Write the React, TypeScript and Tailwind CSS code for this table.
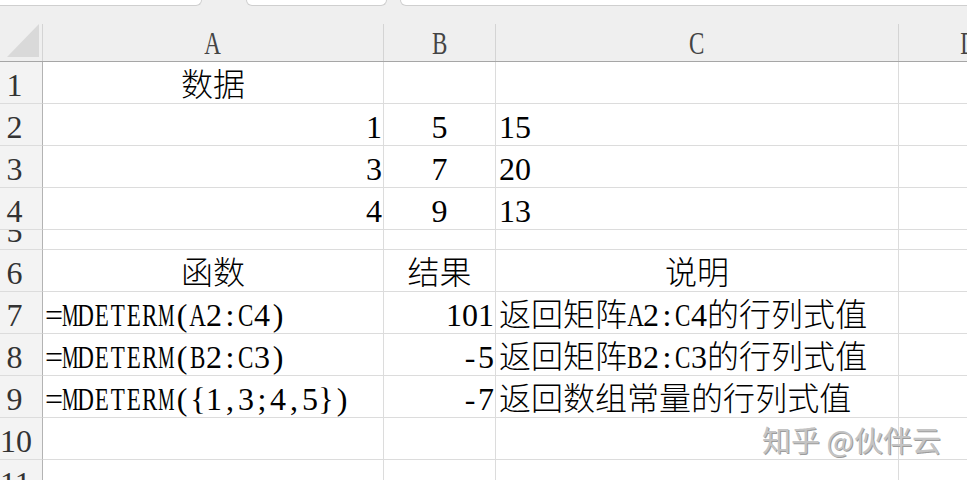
import React from "react";

type Align = "left" | "center" | "right";

interface CellData {
    text: string;
    align: Align;
}

interface RowData {
    label: string;
    short?: boolean;
    cells: (CellData | null)[];
}

// half-width chars get a fixed 16px box, like the sheet's monospace font
function Txt({ s }: { s: string }) {
    return (
        <>
            {s.split("").map((ch, i) =>
                ch.charCodeAt(0) < 128 ? (
                    <span key={i} className="inline-flex w-[16px] justify-center">
                        {/[A-Z]/.test(ch) ? (
                            <span className={`inline-block ${ch === "M" ? "scale-x-[0.58]" : "scale-x-[0.72]"}`}>
                                {ch}
                            </span>
                        ) : (
                            ch
                        )}
                    </span>
                ) : (
                    <span key={i}>{ch}</span>
                )
            )}
        </>
    );
}

const colWidths = ["w-[341px]", "w-[112px]", "w-[403px]"];

const alignClass: Record<Align, string> = {
    left: "justify-start pl-[3px]",
    center: "justify-center",
    right: "justify-end pr-[1px]",
};

const rows: RowData[] = [
    { label: "1", cells: [{ text: "数据", align: "center" }, null, null] },
    { label: "2", cells: [{ text: "1", align: "right" }, { text: "5", align: "center" }, { text: "15", align: "left" }] },
    { label: "3", cells: [{ text: "3", align: "right" }, { text: "7", align: "center" }, { text: "20", align: "left" }] },
    { label: "4", cells: [{ text: "4", align: "right" }, { text: "9", align: "center" }, { text: "13", align: "left" }] },
    { label: "5", short: true, cells: [null, null, null] },
    {
        label: "6",
        cells: [
            { text: "函数", align: "center" },
            { text: "结果", align: "center" },
            { text: "说明", align: "center" },
        ],
    },
    {
        label: "7",
        cells: [
            { text: "=MDETERM(A2:C4)", align: "left" },
            { text: "101", align: "right" },
            { text: "返回矩阵A2:C4的行列式值", align: "left" },
        ],
    },
    {
        label: "8",
        cells: [
            { text: "=MDETERM(B2:C3)", align: "left" },
            { text: "-5", align: "right" },
            { text: "返回矩阵B2:C3的行列式值", align: "left" },
        ],
    },
    {
        label: "9",
        cells: [
            { text: "=MDETERM({1,3;4,5})", align: "left" },
            { text: "-7", align: "right" },
            { text: "返回数组常量的行列式值", align: "left" },
        ],
    },
    { label: "10", cells: [null, null, null] },
    { label: "11", cells: [null, null, null] },
];

const App: React.FC = () => {
    return (
        <div className="relative h-[480px] w-[967px] overflow-hidden bg-white font-['Liberation_Serif','Noto_Sans_CJK_SC',serif] text-[32px] font-light leading-[32px] text-black">
            {/* bottom edges of the name box / formula bar */}
            <div className="flex h-[24px] items-start overflow-hidden bg-[#efefef]">
                <div className="ml-[-8px] h-[6px] w-[210px] shrink-0 rounded-b-[7px] border border-t-0 border-[#cfcfcf] bg-white" />
                <div className="ml-[44px] h-[6px] w-[141px] shrink-0 rounded-b-[7px] border border-t-0 border-[#cfcfcf] bg-white" />
                <div className="ml-[13px] h-[6px] w-[600px] shrink-0 rounded-b-[7px] border border-t-0 border-[#cfcfcf] bg-white" />
            </div>

            {/* column headers */}
            <div className="flex h-[38px] border-b border-[#a6a6a6] bg-[#efefef] text-[#444]">
                <div className="relative w-[43px] shrink-0 border-r border-[#d4d4d4]">
                    <svg className="absolute left-0 top-0" width="42" height="37" viewBox="0 0 42 37">
                        <polygon points="7,33 39,33 39,0" fill="#d9d9d9" />
                    </svg>
                </div>
                {["A", "B", "C"].map((c, i) => (
                    <div
                        key={c}
                        className={`${colWidths[i]} flex shrink-0 items-end justify-center border-r border-[#d4d4d4] pb-[2px]`}
                    >
                        <span>
                            <Txt s={c} />
                        </span>
                    </div>
                ))}
                <div className="flex w-[140px] shrink-0 items-end justify-center pb-[2px]">
                    <span>
                        <Txt s="D" />
                    </span>
                </div>
            </div>

            {/* sheet rows */}
            {rows.map((row) => (
                <div key={row.label} className={`flex ${row.short ? "h-[20px]" : "h-[42px]"}`}>
                    <div className="flex w-[43px] shrink-0 items-end overflow-hidden border-r border-b border-r-[#b3b3b3] border-b-[#dcdcdc] bg-[#f3f3f3] pb-[2px] text-[#333]">
                        <span className="w-[29px] shrink-0 text-center">{row.label}</span>
                    </div>
                    {row.cells.map((cell, i) => (
                        <div
                            key={i}
                            className={`${colWidths[i]} flex shrink-0 items-end border-r border-b border-[#dcdcdc] pb-[2px] ${
                                cell ? alignClass[cell.align] : ""
                            }`}
                        >
                            {cell && (
                                <span className="whitespace-nowrap">
                                    <Txt s={cell.text} />
                                </span>
                            )}
                        </div>
                    ))}
                    <div className="w-[140px] shrink-0 border-b border-[#dcdcdc]" />
                </div>
            ))}

            {/* watermark */}
            <div className="absolute left-[762px] top-[423px] whitespace-nowrap font-['Noto_Sans_CJK_SC',sans-serif] text-[29px] font-normal leading-[32px] text-[#c4c4c4] [text-shadow:1px_1px_0_#9c9c9c]">
                知乎 @伙伴云
            </div>
        </div>
    );
};

export default App;
